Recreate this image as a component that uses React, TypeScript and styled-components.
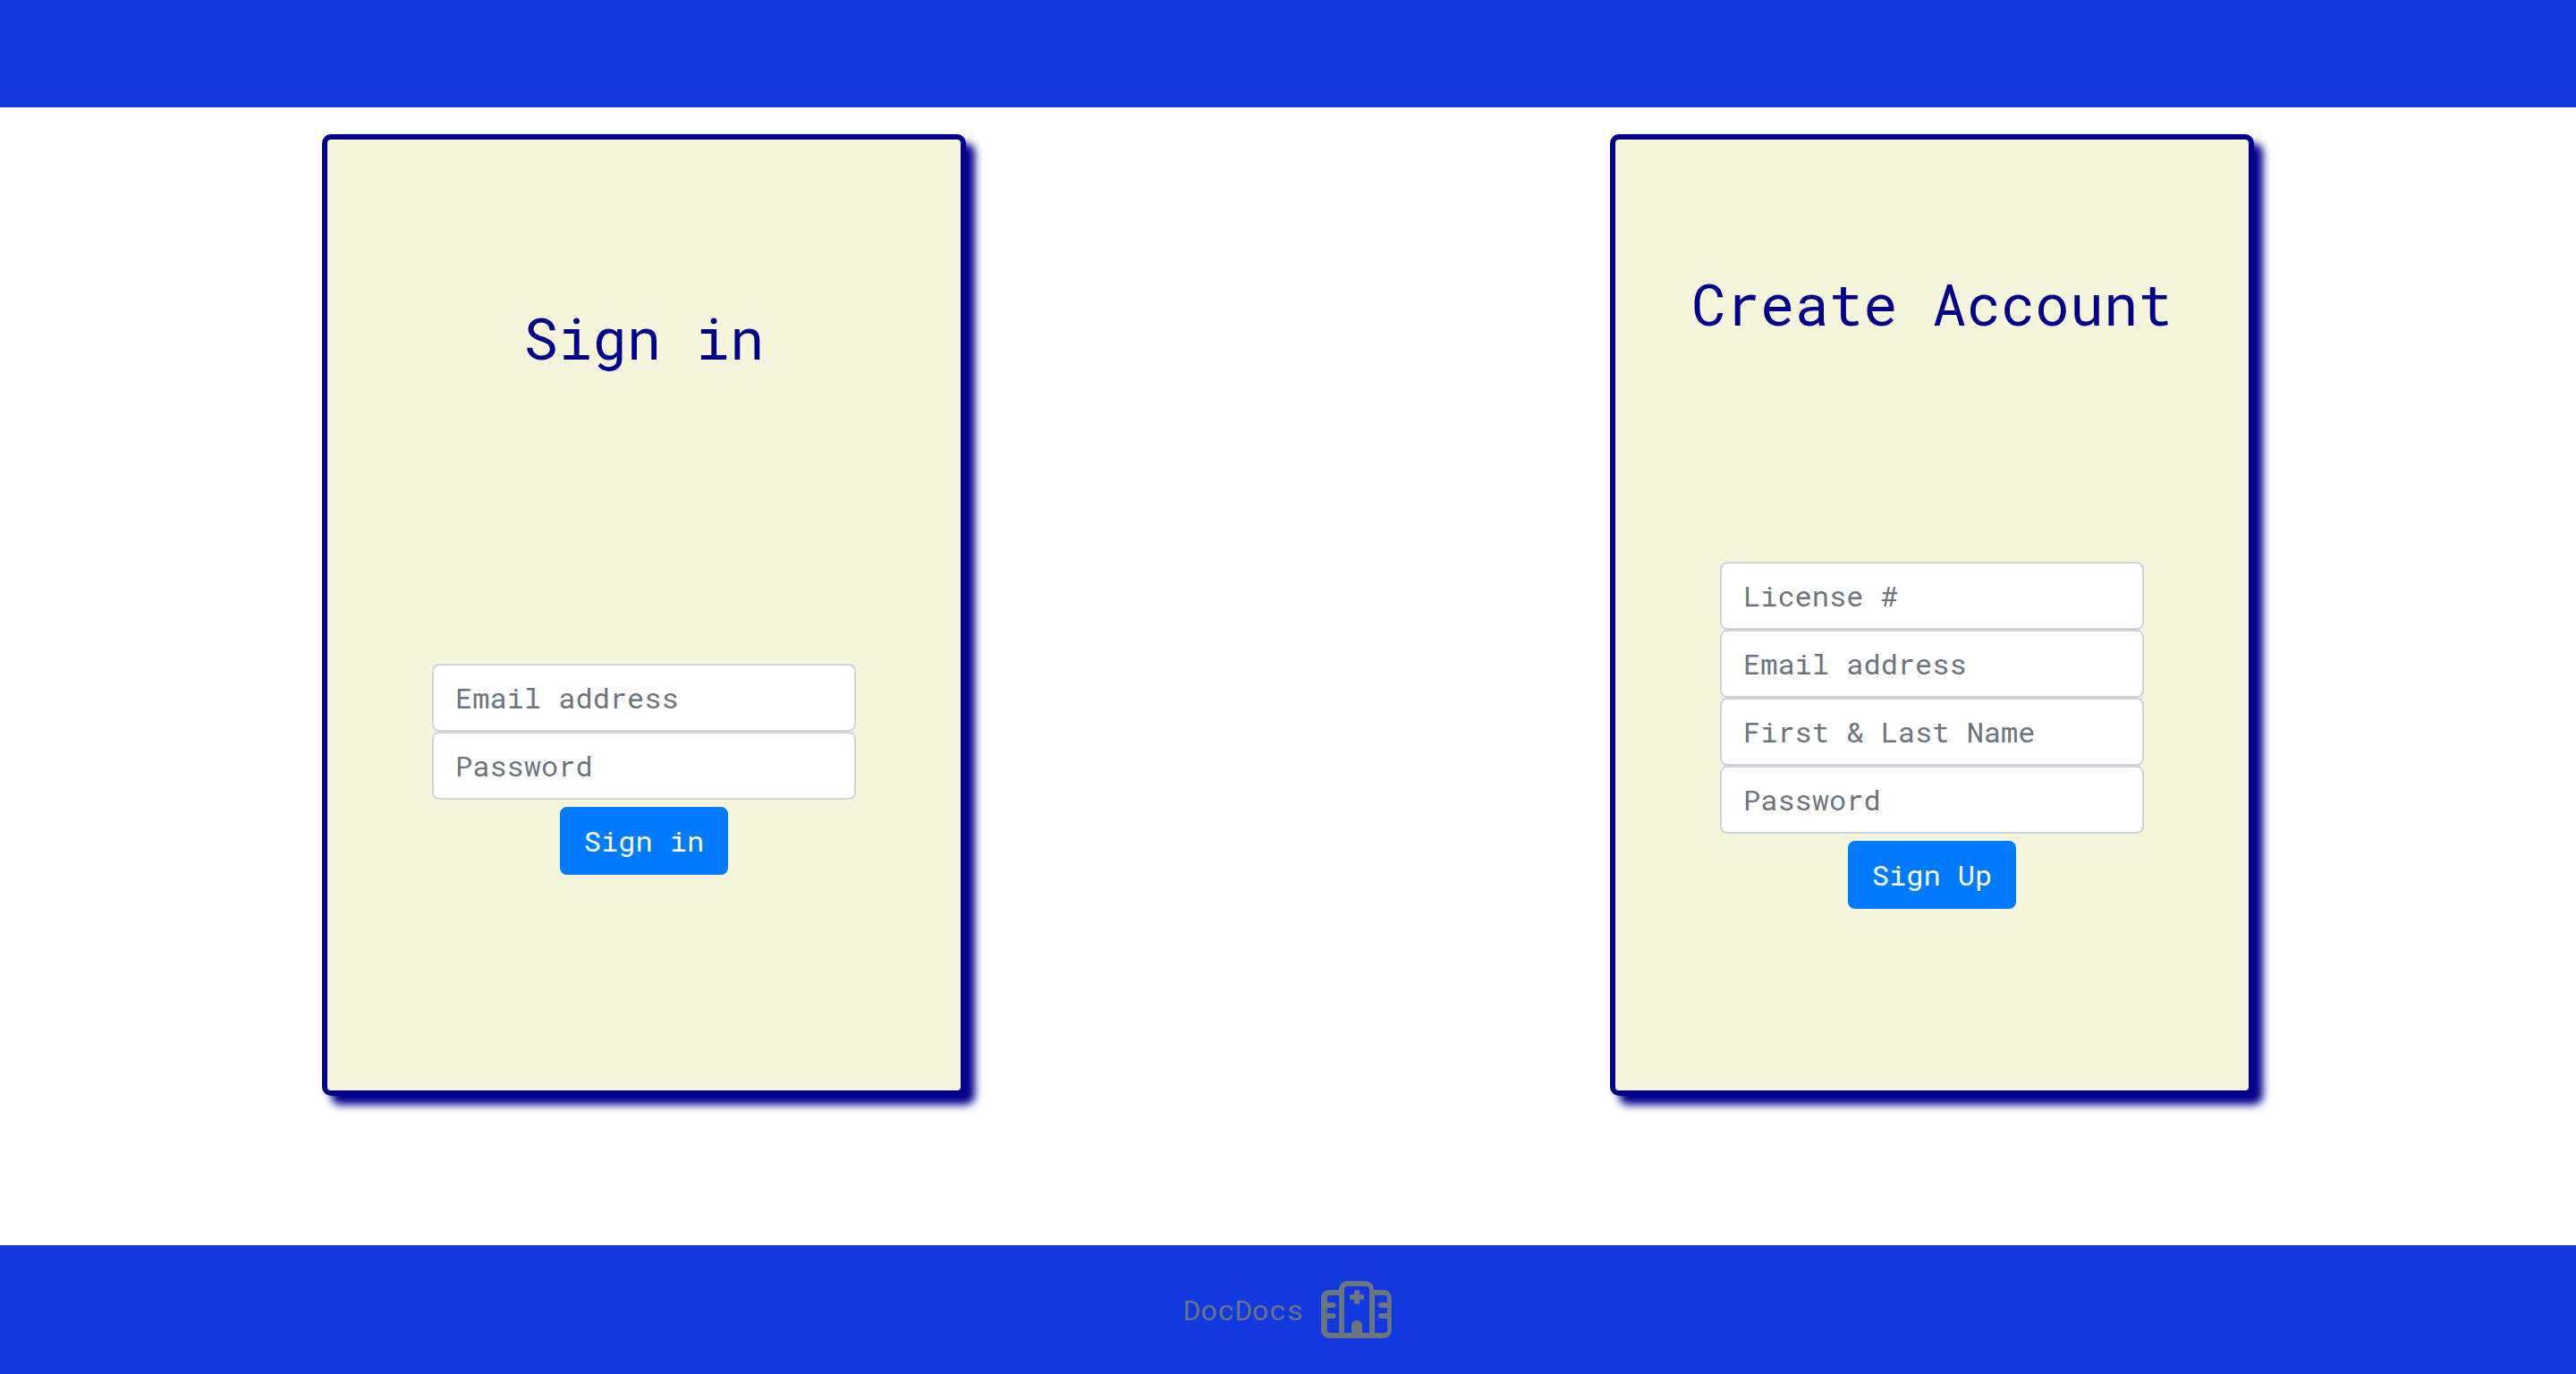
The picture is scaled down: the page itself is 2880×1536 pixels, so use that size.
import React from "react";
import styled, { createGlobalStyle } from "styled-components";
import { FaRegHospital } from "react-icons/fa6";

const GlobalStyle = createGlobalStyle`
  *, *::before, *::after { box-sizing: border-box; }
  body {
    margin: 0;
    background: #ffffff;
    font-family: "Roboto Mono", "Liberation Mono", monospace;
    font-size: 32px;
    line-height: 48px;
  }
`;

const Page = styled.div`
  min-height: 100vh;
  display: flex;
  flex-direction: column;
`;

const TopBar = styled.header`
  height: 120px;
  background: #1238e0;
`;

const Main = styled.main`
  flex: 1;
  display: flex;
  justify-content: space-around;
  align-items: flex-start;
  padding: 30px 0;
`;

const Card = styled.section`
  width: 25%;
  height: 70vh;
  display: flex;
  flex-direction: column;
  justify-content: space-around;
  background: beige;
  border: 6px solid darkblue;
  border-radius: 10px;
  box-shadow: 10px 10px 10px darkblue;
`;

const Title = styled.h1`
  margin: 29px 0 20px;
  color: darkblue;
  font-size: 64px;
  font-weight: 400;
  line-height: 76px;
  text-align: center;
  white-space: nowrap;
`;

const Form = styled.form`
  display: flex;
  flex-direction: column;
  align-items: center;
  margin-bottom: 87px;
  padding: 0 117px;
`;

const Input = styled.input`
  width: 100%;
  height: 76px;
  padding: 11px 24px 13px;
  color: #495057;
  background: #ffffff;
  border: 2px solid #ced4da;
  border-radius: 8px;
  font: inherit;

  &::placeholder {
    color: #6c757d;
    opacity: 1;
  }
`;

const Submit = styled.button`
  height: 76px;
  margin-top: 8px;
  padding: 12px 25px;
  color: #ffffff;
  background: #007bff;
  border: 2px solid #007bff;
  border-radius: 8px;
  font: inherit;
  cursor: pointer;
`;

const Footer = styled.footer`
  height: 144px;
  display: flex;
  align-items: center;
  justify-content: center;
  gap: 20px;
  color: #6c757d;
  background: #1238e0;
`;

const HospitalIcon = styled(FaRegHospital)`
  width: 80px;
  height: 64px;
`;

type Field = { label: string; type: string };

type AuthCardProps = { title: string; action: string; fields: Field[] };

function AuthCard({ title, action, fields }: AuthCardProps) {
  return (
    <Card>
      <Title>{title}</Title>
      <Form onSubmit={(event) => event.preventDefault()}>
        {fields.map(({ label, type }) => (
          <Input key={label} type={type} placeholder={label} aria-label={label} />
        ))}
        <Submit type="submit">{action}</Submit>
      </Form>
    </Card>
  );
}

const signInFields: Field[] = [
  { label: "Email address", type: "email" },
  { label: "Password", type: "password" },
];

const signUpFields: Field[] = [
  { label: "License #", type: "text" },
  { label: "Email address", type: "email" },
  { label: "First & Last Name", type: "text" },
  { label: "Password", type: "password" },
];

export default function App() {
  return (
    <>
      <GlobalStyle />
      <Page>
        <TopBar />
        <Main>
          <AuthCard title="Sign in" action="Sign in" fields={signInFields} />
          <AuthCard title="Create Account" action="Sign Up" fields={signUpFields} />
        </Main>
        <Footer>
          <span>DocDocs</span>
          <HospitalIcon aria-hidden="true" />
        </Footer>
      </Page>
    </>
  );
}
